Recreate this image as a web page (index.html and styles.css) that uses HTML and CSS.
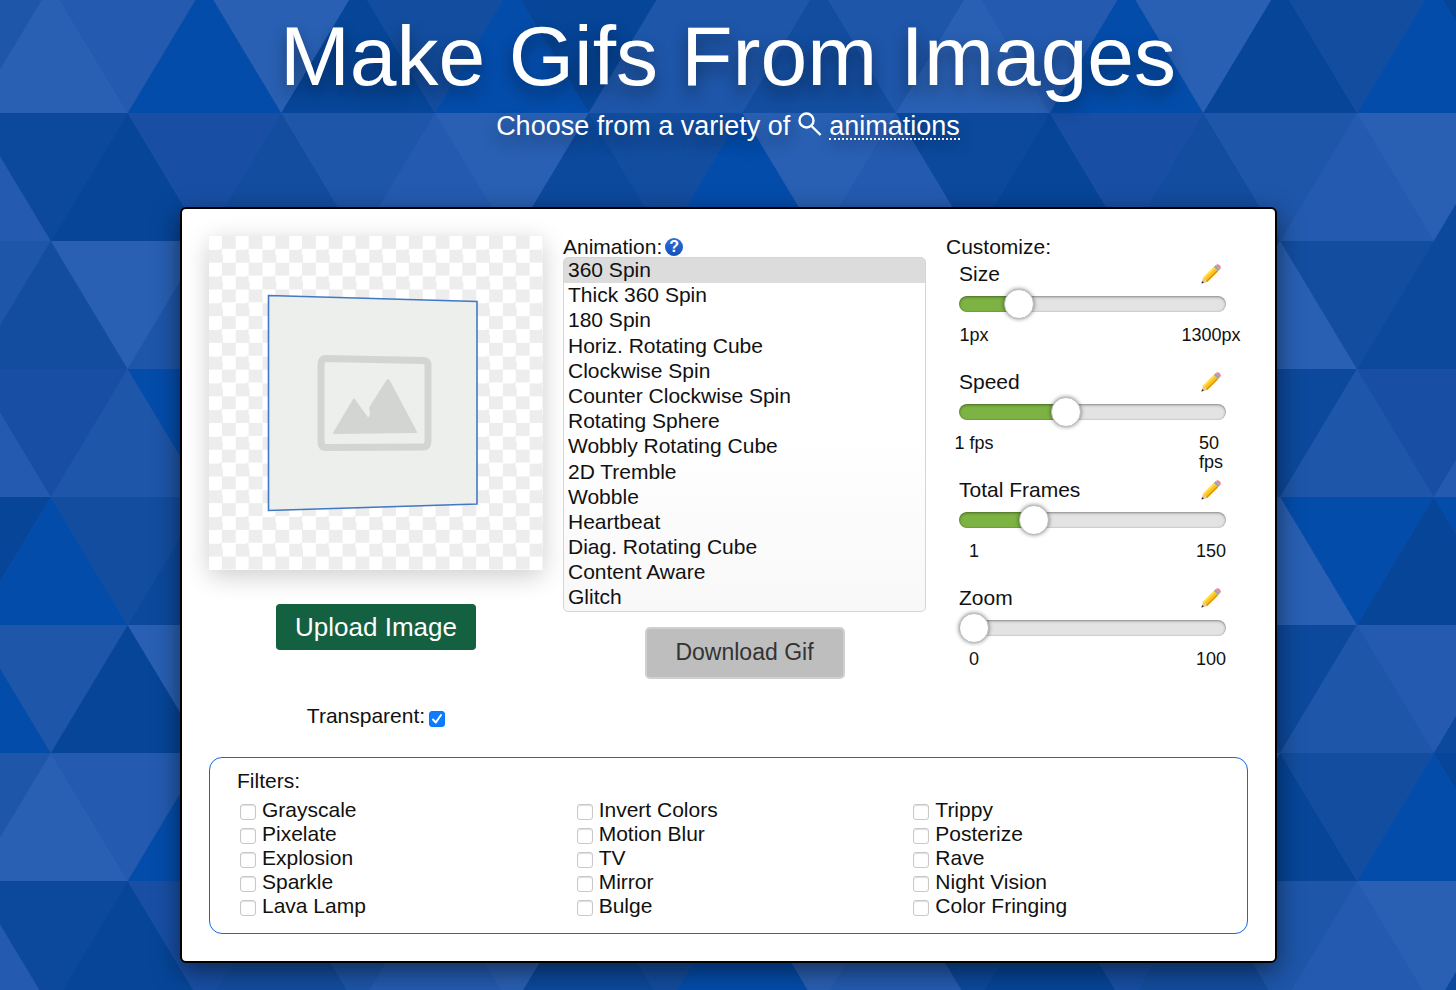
FILE: index.html
```
<!DOCTYPE html>
<html lang="en">
<head>
    <meta charset="UTF-8">
    <meta name="viewport" content="width=device-width, initial-scale=1.0">
    <title>Make Gifs From Images</title>
    <link rel="stylesheet" href="styles.css">
</head>
<body>
    <!-- shared icons -->
    <svg class="sprite" aria-hidden="true">
        <symbol id="pencil" viewBox="0 0 20 20">
            <path d="M.4 19.6 2 13.8 6.2 18z" fill="#edc49a"/>
            <path d="M.4 19.6 1.2 17 3 18.8z" fill="#333"/>
            <path d="M2 13.8 12.8 3l4.200 4.200L6.200 18z" fill="#fcc41f"/>
            <path d="M2 13.8 12.8 3l1.200 1.200L3.200 15z" fill="#ffe05a"/>
            <path d="M5.200 17 16 6.200l1 1L6.200 18z" fill="#d9920f"/>
            <path d="M12.8 3 14.800 1l4.200 4.200-2 2z" fill="#93a5b8"/>
            <path d="M14.800 1q2-1.600 4 .4t.2 3.800z" fill="#f5808c"/>
        </symbol>
    </svg>

    <header class="header">
        <h1>Make Gifs From Images</h1>
        <p>
            Choose from a variety of
            <svg class="search-icon" viewBox="0 0 24 24" aria-hidden="true">
                <circle cx="8.500" cy="8.500" r="7"/>
                <path d="M13.500 14 22.600 23"/>
            </svg>
            <a href="#animation">animations</a>
        </p>
    </header>

    <main class="card">
        <div class="columns">
            <section class="preview-col">
                <svg class="preview" viewBox="0 0 334 334" role="img" aria-label="Preview">
                    <path d="M59.5 59.5 268 65.5V268L59.5 274.5z" fill="#ecefec" stroke="#4279c4" stroke-width="1.6"/>
                    <path d="M117 122.5 214 124.5q5 0 5 5V205q0 6-5 6l-97 .5q-5 0-5-6V128.5q0-6 5-6z" fill="none" stroke="#d2d5d2" stroke-width="7"/>
                    <path d="M125 197 145 163.5 159 183q5-3 2-11L178 145q1-2 2 0l27 51z" fill="#d2d5d2" stroke="#d2d5d2" stroke-width="2" stroke-linejoin="round"/>
                </svg>
                <button class="upload-btn" type="button">Upload Image</button>
                <div class="transparent">
                    <label for="transparent">Transparent:</label>
                    <input type="checkbox" id="transparent" checked>
                </div>
            </section>

            <section class="animation-col">
                <div class="label-row">
                    <label for="animation">Animation:</label>
                    <button class="help-btn" type="button">?</button>
                </div>
                <select id="animation" size="14">
                    <option selected>360 Spin</option>
                    <option>Thick 360 Spin</option>
                    <option>180 Spin</option>
                    <option>Horiz. Rotating Cube</option>
                    <option>Clockwise Spin</option>
                    <option>Counter Clockwise Spin</option>
                    <option>Rotating Sphere</option>
                    <option>Wobbly Rotating Cube</option>
                    <option>2D Tremble</option>
                    <option>Wobble</option>
                    <option>Heartbeat</option>
                    <option>Diag. Rotating Cube</option>
                    <option>Content Aware</option>
                    <option>Glitch</option>
                </select>
                <button class="download-btn" type="button" disabled>Download Gif</button>
            </section>

            <section class="customize-col">
                <div class="label-row">Customize:</div>
                <div class="slider">
                    <div class="slider-head">
                        <label for="size">Size</label>
                        <button type="button" aria-label="Edit size"><svg><use href="#pencil"/></svg></button>
                    </div>
                    <input type="range" id="size" min="1" max="1300" value="248">
                    <div class="slider-limits"><span>1px</span><span>1300px</span></div>
                </div>
                <div class="slider">
                    <div class="slider-head">
                        <label for="speed">Speed</label>
                        <button type="button" aria-label="Edit speed"><svg><use href="#pencil"/></svg></button>
                    </div>
                    <input type="range" id="speed" min="1" max="50" value="20">
                    <div class="slider-limits"><span>1 fps</span><span>50<br>fps</span></div>
                </div>
                <div class="slider">
                    <div class="slider-head">
                        <label for="frames">Total Frames</label>
                        <button type="button" aria-label="Edit total frames"><svg><use href="#pencil"/></svg></button>
                    </div>
                    <input type="range" id="frames" min="1" max="150" value="39">
                    <div class="slider-limits"><span>1</span><span>150</span></div>
                </div>
                <div class="slider">
                    <div class="slider-head">
                        <label for="zoom">Zoom</label>
                        <button type="button" aria-label="Edit zoom"><svg><use href="#pencil"/></svg></button>
                    </div>
                    <input type="range" id="zoom" min="0" max="100" value="0">
                    <div class="slider-limits"><span>0</span><span>100</span></div>
                </div>
            </section>
        </div>

        <fieldset class="filters">
            <legend>Filters:</legend>
            <div class="filter-list">
                <label><input type="checkbox"> Grayscale</label>
                <label><input type="checkbox"> Pixelate</label>
                <label><input type="checkbox"> Explosion</label>
                <label><input type="checkbox"> Sparkle</label>
                <label><input type="checkbox"> Lava Lamp</label>
                <label><input type="checkbox"> Invert Colors</label>
                <label><input type="checkbox"> Motion Blur</label>
                <label><input type="checkbox"> TV</label>
                <label><input type="checkbox"> Mirror</label>
                <label><input type="checkbox"> Bulge</label>
                <label><input type="checkbox"> Trippy</label>
                <label><input type="checkbox"> Posterize</label>
                <label><input type="checkbox"> Rave</label>
                <label><input type="checkbox"> Night Vision</label>
                <label><input type="checkbox"> Color Fringing</label>
            </div>
        </fieldset>
    </main>

    <script src="script.js"></script>
</body>
</html>
```
FILE: styles.css
```
* {
    box-sizing: border-box;
}

body {
    margin: 0;
    font-family: "Liberation Sans", Helvetica, Arial, sans-serif;
    font-size: 21px;
    line-height: 24px;
    color: #111;
    background-color: #184fa5;
    background-size: 922px 768px;
    background-position: -26px -15px;
}

button,
select {
    font-family: inherit;
}

.sprite {
    display: none;
}

/* header */
.header {
    padding: 8px 20px 65px;
    text-align: center;
    color: white;
    text-shadow: 0 8px 16px rgba(0, 0, 0, 0.4);
}

.header h1 {
    margin: 0 0 6px;
    font-size: 84px;
    font-weight: normal;
    line-height: 96px;
}

.header p {
    margin: 0;
    font-size: 27px;
    line-height: 32px;
}

.header a {
    color: white;
    text-decoration: none;
    border-bottom: 2px dotted white;
    display: inline-block;
    line-height: 24px;
}

.search-icon {
    width: 24px;
    height: 24px;
    fill: none;
    stroke: white;
    stroke-width: 2.4;
    vertical-align: -1px;
}

/* card */
.card {
    margin: 0 179px 27px 180px;
    padding: 27px;
    background: white;
    border: 2px solid black;
    border-radius: 6px;
    box-shadow: 0 8px 26px rgba(0, 0, 0, 0.5);
}

.columns {
    display: grid;
    grid-template-columns: 334fr 363fr 302fr;
    gap: 20px;
}

.preview-col,
.animation-col {
    display: flex;
    flex-direction: column;
    align-items: center;
}

.preview {
    width: 100%;
    background: repeating-conic-gradient(#ededed 0 25%, white 0 50%) 0 0 / 8% 8%;
    box-shadow: 0 6px 24px rgba(0, 0, 0, 0.2);
}

.upload-btn {
    width: 200px;
    height: 46px;
    margin: 34px 0 54px;
    padding: 0;
    border: none;
    border-radius: 4px;
    background: #136140;
    color: white;
    font-size: 26px;
}

.transparent {
    display: flex;
    gap: 4px;
}

/* animation list */
.label-row {
    display: flex;
    align-items: center;
    align-self: flex-start;
    gap: 3px;
    height: 21px;
}

.help-btn {
    width: 18px;
    height: 18px;
    padding: 0;
    border: none;
    border-radius: 50%;
    background: linear-gradient(#2c6fdc, #1550b8);
    color: white;
    font-size: 16px;
    font-weight: bold;
    line-height: 18px;
}

#animation {
    width: 100%;
    padding: 0;
    border: 1px solid #d5d5d5;
    border-radius: 5px;
    background: linear-gradient(white 50%, #f8f8f8);
    color: #111;
    font-size: 21px;
    overflow: hidden;
    outline: none;
}

#animation option {
    padding: 0 4px;
    line-height: 1.21;
}

#animation option:checked {
    background: #dcdcdc linear-gradient(#dcdcdc, #dcdcdc);
    color: #111;
}

.download-btn {
    width: 200px;
    height: 52px;
    margin-top: 15px;
    padding: 0;
    border: 2px solid #d0d0d0;
    border-radius: 5px;
    background: #bebebe;
    color: #333;
    font-size: 23px;
}

/* sliders */
.customize-col .label-row {
    margin-bottom: 5px;
}

.slider {
    height: 108px;
    margin: 0 22px 0 13px;
}

.slider-head {
    display: flex;
    align-items: center;
    justify-content: space-between;
    height: 24px;
    padding-right: 5px;
}

.slider-head button {
    display: flex;
    padding: 0;
    border: none;
    background: none;
}

.slider-head svg {
    width: 20px;
    height: 20px;
}

.slider input {
    --fill: 0%;
    appearance: none;
    display: block;
    width: 100%;
    height: 30px;
    margin: 3px 0 7px;
    background: none;
}

.slider input::-webkit-slider-runnable-track {
    height: 16px;
    border-radius: 8px;
    background: linear-gradient(#7cb342, #7cb342) 0 0 / var(--fill) 100% no-repeat #e3e3e3;
    box-shadow: inset 0 1px 3px rgba(0, 0, 0, 0.4), inset 0 0 1px rgba(0, 0, 0, 0.4);
}

.slider input::-webkit-slider-thumb {
    appearance: none;
    width: 30px;
    height: 30px;
    margin-top: -7px;
    border: 1px solid #bbb;
    border-radius: 50%;
    background: white;
    box-shadow: 0 0 4px rgba(0, 0, 0, 0.5);
}

.slider-limits {
    display: flex;
    justify-content: space-between;
    font-size: 18px;
    line-height: 19px;
}

.slider-limits span {
    display: flex;
    flex-wrap: wrap;
    justify-content: center;
    width: 30px;
    white-space: nowrap;
}

/* checkboxes */
input[type="checkbox"] {
    appearance: none;
    flex: none;
    width: 16px;
    height: 16px;
    margin: 7px 0 0;
    border: 1px solid #c8c8c8;
    border-radius: 3px;
    background: white;
    box-shadow: inset 0 1px 1px #ddd;
}

input[type="checkbox"]:checked {
    border-color: #0b78f5;
    background: #0b7cff url("data:image/svg+xml,%3Csvg xmlns='http://www.w3.org/2000/svg' viewBox='0 0 14 14'%3E%3Cpath d='M3 7.5 5.8 10.5 11 3' fill='none' stroke='white' stroke-width='2' stroke-linecap='round' stroke-linejoin='round'/%3E%3C/svg%3E");
    box-shadow: none;
}

/* filters */
.filters {
    margin: 29px 0 0;
    padding: 11px 0 15px 27px;
    border: 1px solid #1468e0;
    border-radius: 13px;
}

.filters legend {
    float: left;
    width: 100%;
    margin-bottom: 5px;
    padding: 0;
}

.filters input[type="checkbox"] {
    margin-top: 6px;
}

.filter-list {
    clear: both;
    display: grid;
    grid-template-columns: repeat(3, 1fr);
    grid-template-rows: repeat(5, 24px);
    grid-auto-flow: column;
}

.filter-list label {
    display: flex;
    gap: 6px;
    padding-left: 3px;
}
```
FILE: script.js
```
// triangle background, one letter per triangle, every other one points up
var colors = {
    a: '#2960b3',
    b: '#245bb0',
    c: '#1e56a9',
    d: '#184fa5',
    e: '#134d9f',
    f: '#0c499c',
    g: '#064598',
    h: '#044caa'
}
var rows = [
    'cabhagehgcce',
    'bfgdecbafeha',
    'ceacdaeffcbh',
    'bdchefcdbgae',
    'ghefbahghadc',
    'hcgaefcbfdhe'
]

var shapes = ''
rows.forEach(function (row, y) {
    for (var n = 0; n <= 12; n++) {
        var up = (n + y) % 2 === 1
        var base = up ? y + 1 : y
        var tip = up ? y : y + 1
        var color = colors[row[n % 12]]
        shapes += '<path d="M' + (n - 1) + ' ' + base + 'H' + (n + 1) + 'L' + n + ' ' + tip + 'z" fill="' + color + '"/>'
    }
})
var tile = '<svg xmlns="http://www.w3.org/2000/svg" width="922" height="768" viewBox="0 0 12 6" preserveAspectRatio="none">' + shapes + '</svg>'
document.body.style.backgroundImage = 'url("data:image/svg+xml,' + encodeURIComponent(tile) + '")'

// green part of each slider ends under the middle of the thumb
function fillSlider(input) {
    var part = (input.value - input.min) / (input.max - input.min)
    input.style.setProperty('--fill', part === 0 ? '0%' : 'calc(15px + (100% - 30px) * ' + part + ')')
}

document.querySelectorAll('.slider input').forEach(function (input) {
    fillSlider(input)
    input.addEventListener('input', function () {
        fillSlider(input)
    })
})
```
